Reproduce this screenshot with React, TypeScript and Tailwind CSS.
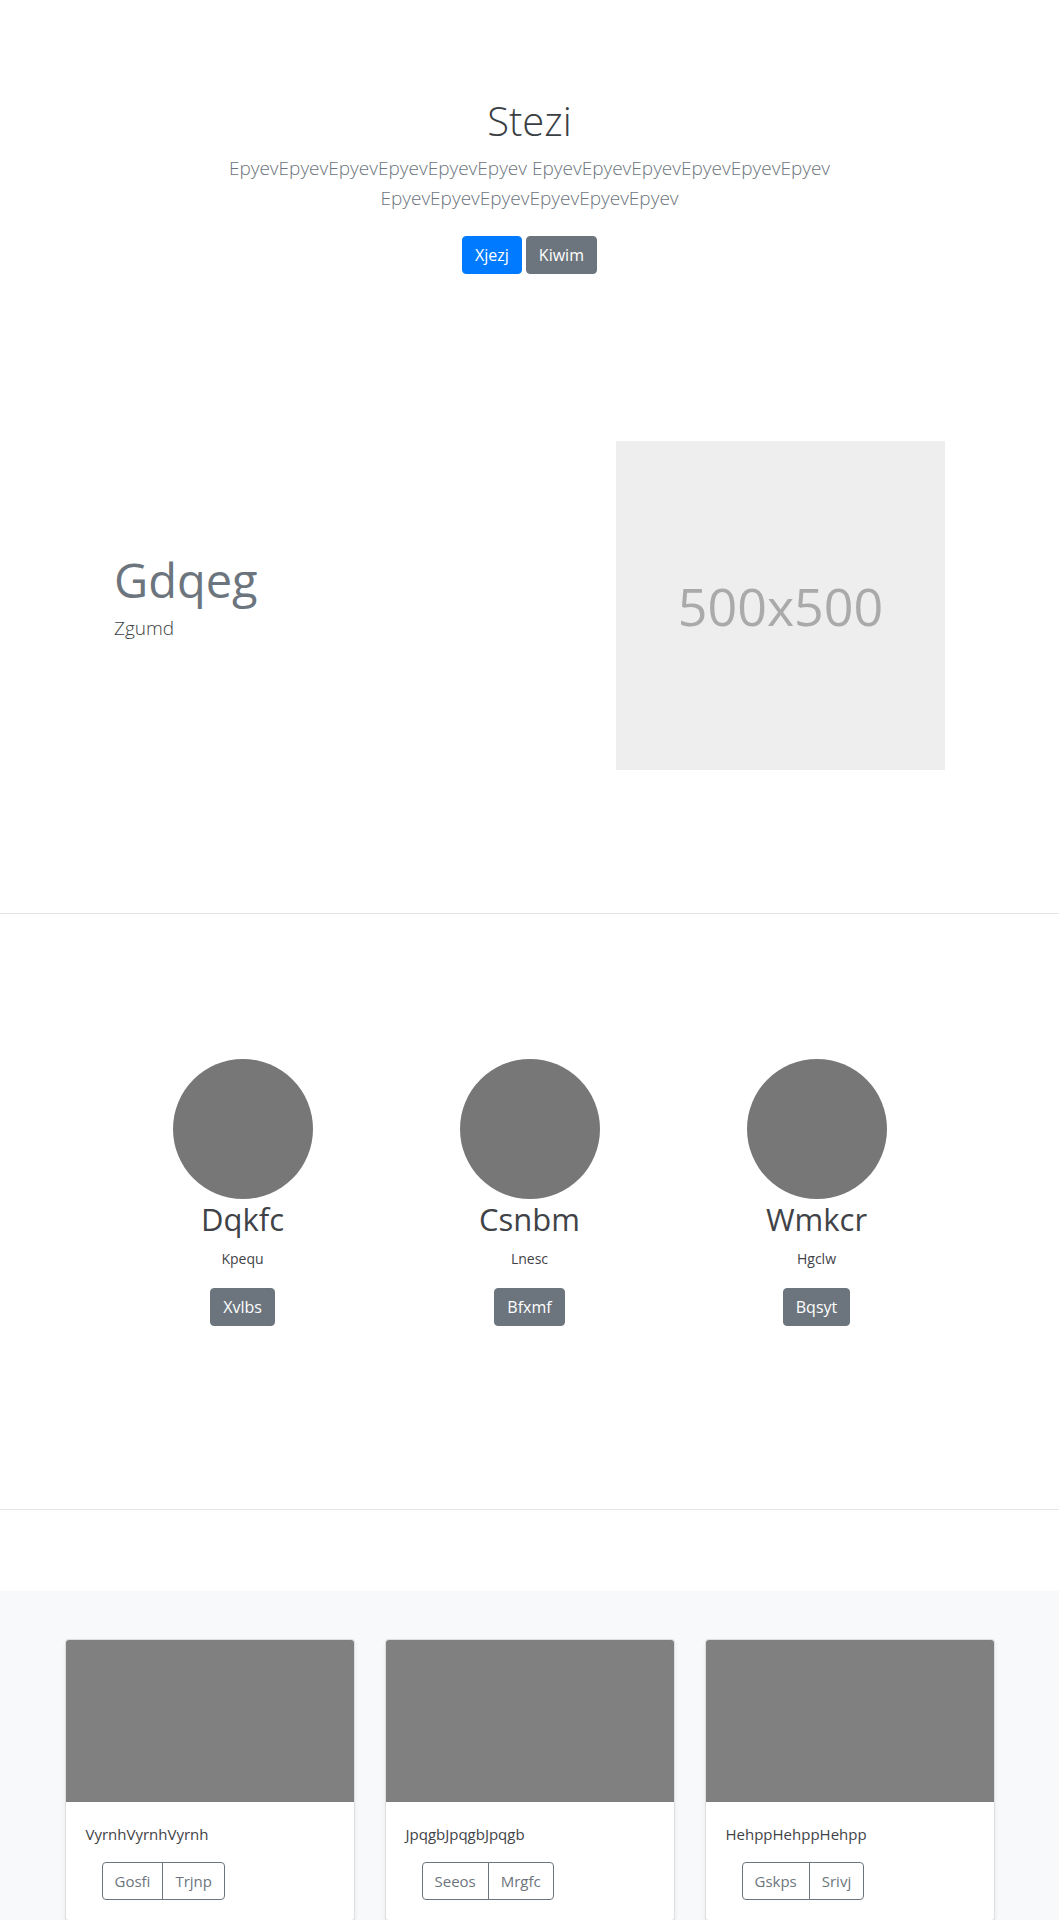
import React from "react";

const people = [
  { name: "Dqkfc", sub: "Kpequ", btn: "Xvlbs" },
  { name: "Csnbm", sub: "Lnesc", btn: "Bfxmf" },
  { name: "Wmkcr", sub: "Hgclw", btn: "Bqsyt" },
];

const cards = [
  { text: "VyrnhVyrnhVyrnh", a: "Gosfi", b: "Trjnp" },
  { text: "JpqgbJpqgbJpqgb", a: "Seeos", b: "Mrgfc" },
  { text: "HehppHehppHehpp", a: "Gskps", b: "Srivj" },
];

export default function App() {
  return (
    <div className="min-h-[1920px] bg-white font-['Open_Sans','Noto_Sans',sans-serif] text-[#212529]">
      {/* Jumbotron */}
      <section className="pt-[97px] text-center">
        <div className="mx-auto w-[700px]">
          <h1 className="mb-2 text-[40px] font-light leading-[1.2] text-[#3a3f44]">Stezi</h1>
          <p className="text-[19px] font-light leading-[30px] text-[#6c757d]">
            EpyevEpyevEpyevEpyevEpyevEpyev EpyevEpyevEpyevEpyevEpyevEpyev EpyevEpyevEpyevEpyevEpyevEpyev
          </p>
          <div className="mt-[23px] flex justify-center gap-[4px]">
            <a className="rounded-[4px] border border-[#007bff] bg-[#007bff] px-3 py-[6px] text-[16px] leading-6 text-white">
              Xjezj
            </a>
            <a className="rounded-[4px] border border-[#6c757d] bg-[#6c757d] px-3 py-[6px] text-[16px] leading-6 text-white">
              Kiwim
            </a>
          </div>
        </div>
      </section>

      {/* Feature */}
      <section className="flex items-center justify-between px-[114px] pt-[167px] pb-[143px]">
        <div>
          <h2 className="mb-[4px] text-[47px] font-normal leading-[1.2] text-[#6c757d]">Gdqeg</h2>
          <p className="mb-4 text-[19px] font-light leading-[30px] text-[#3a3f44]">Zgumd</p>
        </div>
        <div className="flex h-[329px] w-[329px] items-center justify-center bg-[#eeeeee]">
          <span className="text-[52px] leading-none text-[#aaaaaa]">500x500</span>
        </div>
      </section>

      <div className="h-px bg-black/10" />

      {/* Marketing */}
      <section className="pt-[145px] pb-[183px]">
        <div className="mx-auto grid w-[861px] grid-cols-3">
          {people.map((p) => (
            <div key={p.name} className="flex flex-col items-center text-center">
              <div className="h-[140px] w-[140px] rounded-full bg-[#777777]" />
              <h2 className="mt-[2px] mb-[10px] text-[31px] font-normal leading-[1.2] text-[#3f4347]">{p.name}</h2>
              <p className="mb-[18px] text-[14px] leading-[22px] text-[#3f4347]">{p.sub}</p>
              <a className="rounded-[4px] border border-[#6c757d] bg-[#6c757d] px-3 py-[6px] text-[16px] leading-6 text-white">
                {p.btn}
              </a>
            </div>
          ))}
        </div>
      </section>

      <div className="h-px bg-black/10" />

      <div className="h-[81px]" />

      {/* Album */}
      <section className="bg-[#f8f9fa] pt-12 pb-12">
        <div className="mx-auto grid w-[930px] grid-cols-3 gap-[30px]">
          {cards.map((c) => (
            <div
              key={c.text}
              className="mb-6 rounded-[4px] border border-black/[0.125] bg-white shadow-[0_2px_4px_rgba(0,0,0,0.075)]"
            >
              <div className="h-[162px] rounded-t-[3px] bg-[#808080]" />
              <div className="p-5">
                <p className="mb-4 text-[15px] leading-6 text-[#3f4347]">{c.text}</p>
                <div className="ml-4 flex">
                  <a className="rounded-l-[4px] border border-[#6c757d] px-3 py-[6px] text-[15px] leading-6 text-[#6c757d]">
                    {c.a}
                  </a>
                  <a className="-ml-px rounded-r-[4px] border border-[#6c757d] px-3 py-[6px] text-[15px] leading-6 text-[#6c757d]">
                    {c.b}
                  </a>
                </div>
              </div>
            </div>
          ))}
        </div>
      </section>
    </div>
  );
}
